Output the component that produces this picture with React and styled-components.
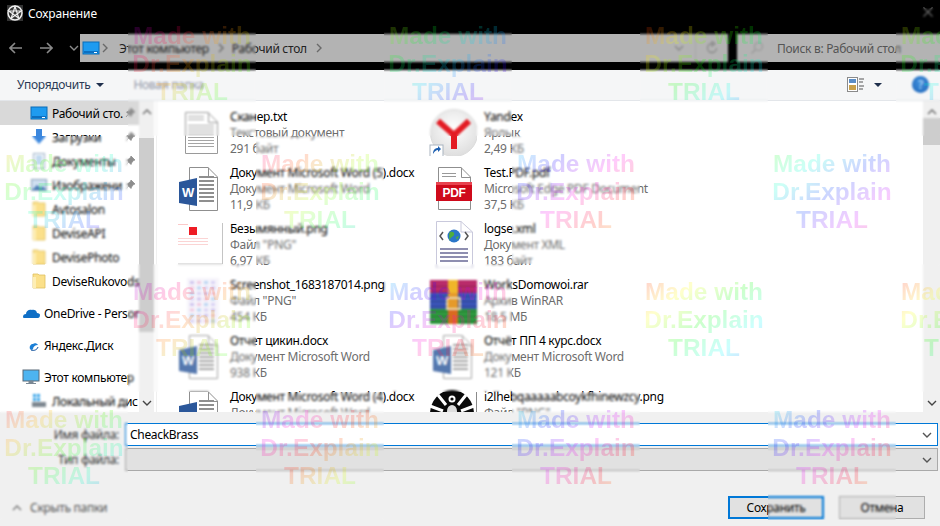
import React from 'react';
import styled, { createGlobalStyle } from 'styled-components';

const Global = createGlobalStyle`
  html, body { margin: 0; padding: 0; background: #000; }
  body { font-family: "Noto Sans", "Open Sans", sans-serif; }
`;

const Page = styled.div`
  position: relative;
  width: 940px;
  height: 526px;
  overflow: hidden;
  display: flex;
  flex-direction: column;
  font-size: 12px;
  letter-spacing: -0.3px;
  color: #000;
`;

const TitleBar = styled.div`
  height: 26px;
  background: #000;
  color: #fff;
  display: flex;
  align-items: center;
  padding-left: 7px;
  gap: 5px;
  flex: none;
  letter-spacing: -0.12px;
`;
const TitleText = styled.span`
  flex: 1;
`;
const CloseBtn = styled.svg`
  width: 12px;
  height: 12px;
  margin: 0 6px 2px 0;
`;

const NavBar = styled.div`
  height: 44px;
  background: #000;
  display: flex;
  align-items: flex-start;
  padding-top: 8px;
  box-sizing: border-box;
  flex: none;
`;
const ArrowGroup = styled.div`
  width: 80px;
  height: 28px;
  display: flex;
  align-items: center;
  padding-left: 9px;
  box-sizing: border-box;
  gap: 16px;
  flex: none;
`;
const Address = styled.div`
  width: 648px;
  height: 28px;
  background: #b3b3b3;
  display: flex;
  align-items: center;
  color: #222;
  padding-left: 2px;
  box-sizing: border-box;
  flex: none;
`;
const Crumb = styled.span`
  white-space: nowrap;
  margin: 0 7px 0 ${p => p.$ml || 6}px;
`;
const Spacer = styled.div`
  flex: 1;
`;
const AddrTool = styled.div`
  width: 33px;
  height: 28px;
  display: flex;
  align-items: center;
  justify-content: center;
  border-left: ${p => (p.$sep ? '1px solid #a8a8a8' : '0')};
  box-sizing: border-box;
`;
const Search = styled.div`
  margin-left: 9px;
  flex: 1;
  height: 28px;
  background: #b3b3b3;
  color: #555;
  display: flex;
  align-items: center;
  padding-left: 13px;
  gap: 13px;
`;

const Toolbar = styled.div`
  height: 31px;
  background: #f5f6f7;
  border-bottom: 1px solid #e3e6ea;
  box-sizing: border-box;
  display: flex;
  align-items: center;
  padding: 0 11px 1px 17px;
  flex: none;
`;
const ToolLabel = styled.span`
  color: ${p => (p.$off ? '#8f95a6' : '#2b3a55')};
  margin-left: ${p => p.$ml || 0}px;
`;
const Caret = styled.span`
  width: 0;
  height: 0;
  border-left: 4px solid transparent;
  border-right: 4px solid transparent;
  border-top: 4px solid #1f2f4c;
  margin-left: ${p => p.$ml || 0}px;
`;
const HelpBtn = styled.div`
  width: 17px;
  height: 17px;
  border-radius: 50%;
  background: radial-gradient(circle at 50% 40%, #3f8fdc, #1d64b8);
  color: #9cc4ee;
  font-weight: 700;
  font-size: 12px;
  display: flex;
  align-items: center;
  justify-content: center;
  margin-left: 30px;
`;

const Body = styled.div`
  flex: 1;
  display: flex;
  min-height: 0;
  background: #fff;
`;
const NavPane = styled.div`
  width: 139px;
  flex: none;
  overflow: hidden;
  display: flex;
  flex-direction: column;
`;
const NavRow = styled.div`
  height: 24px;
  flex: none;
  display: flex;
  align-items: center;
  white-space: nowrap;
  position: relative;
  padding-left: ${p => (p.$root ? 22 : 30)}px;
  margin-top: ${p => p.$gap || 0}px;
  background: ${p => (p.$active ? '#d9d9d9' : 'transparent')};
`;
const NavIcon = styled.svg`
  width: 18px;
  height: 18px;
  flex: none;
  margin-right: 4px;
`;
const Pin = styled.svg`
  position: absolute;
  left: 125px;
  top: 6px;
  width: 11px;
  height: 11px;
`;
const Scroll = styled.div`
  width: ${p => p.$w}px;
  flex: none;
  background: #f0f0f0;
  display: flex;
  flex-direction: column;
  align-items: stretch;
`;
const ScrollEnd = styled.div`
  height: ${p => p.$h}px;
  display: flex;
  align-items: ${p => p.$align || 'flex-start'};
  justify-content: center;
  flex: none;
  padding: 6px 0;
  box-sizing: border-box;
`;
const Thumb = styled.div`
  height: ${p => p.$h}px;
  background: #cdcdcd;
  flex: none;
`;
const Divider = styled.div`
  width: 3px;
  flex: none;
  border-right: 1px solid #f0f0f0;
  box-sizing: border-box;
`;
const Files = styled.div`
  flex: 1;
  overflow: hidden;
  display: grid;
  grid-template-columns: 254px 254px;
  grid-auto-rows: 56px;
  padding: 7px 0 0 18px;
`;
const FileItem = styled.div`
  display: flex;
  gap: 7px;
  white-space: nowrap;
`;
const FileIcon = styled.svg`
  width: 48px;
  height: 48px;
  flex: none;
  opacity: ${p => p.$fade || 1};
`;
const FileText = styled.div`
  padding-top: 1px;
  line-height: 16px;
`;
const Sub = styled.div`
  color: #6d6d6d;
`;

const Bottom = styled.div`
  height: 114px;
  flex: none;
  background: #f0f0f0;
  display: flex;
  flex-direction: column;
  padding: 11px 2px 0 0;
  box-sizing: border-box;
`;
const FieldRow = styled.div`
  display: flex;
  align-items: center;
  height: ${p => p.$h}px;
  margin-bottom: 2px;
`;
const FieldLabel = styled.label`
  width: 119px;
  text-align: right;
  color: #333;
  margin-right: 6px;
  flex: none;
`;
const Field = styled.div`
  flex: 1;
  height: 100%;
  box-sizing: border-box;
  border: 1px solid ${p => (p.$focus ? '#0078d7' : '#a9a9a9')};
  background: ${p => (p.$focus ? '#fff' : '#e1e1e1')};
  display: flex;
  align-items: center;
  padding: 0 5px 0 4px;
`;
const FieldText = styled.span`
  flex: 1;
`;
const Footer = styled.div`
  display: flex;
  align-items: center;
  margin-top: 23px;
  padding: 0 13px 0 12px;
`;
const Hide = styled.div`
  display: flex;
  align-items: center;
  gap: 8px;
  color: #555;
  flex: 1;
`;
const Btn = styled.div`
  width: ${p => p.$w}px;
  height: 23px;
  box-sizing: border-box;
  background: #e1e1e1;
  border: ${p => (p.$primary ? '2px solid #0078d7' : '1px solid #adadad')};
  display: flex;
  align-items: center;
  justify-content: center;
  margin-left: ${p => p.$ml || 0}px;
`;

const Mark = styled.div`
  position: absolute;
  width: 128px;
  height: 128px;
  box-sizing: border-box;
  padding-top: 14px;
  backdrop-filter: blur(1.25px);
  pointer-events: none;
  left: ${p => p.$x}px;
  top: ${p => p.$y}px;
`;
const MarkText = styled.div`
  font: bold 24.4px/28px "Liberation Sans", Arial, sans-serif;
  letter-spacing: 0;
  text-align: center;
  white-space: nowrap;
  color: transparent;
  -webkit-background-clip: text;
  background-clip: text;
  background-image: linear-gradient(
    142deg,
    ${p => [0, 60, 120, 180, 240].map(d => `hsla(${p.$hue + d}, 100%, 50%, 0.2)`).join(', ')}
  );
`;

const Chev = ({ dir = 'right', color = '#666', size = 10 }) => {
  const d = { right: 'M3 1l4 4-4 4', down: 'M1 3l4 4 4-4', up: 'M1 7l4-4 4 4' }[dir];
  return (
    <svg width={size} height={size} viewBox="0 0 10 10">
      <path d={d} fill="none" stroke={color} strokeWidth="1.4" />
    </svg>
  );
};
const ArrowIcon = ({ flip }) => (
  <svg width="14" height="12" viewBox="0 0 14 12" style={flip ? { transform: 'scaleX(-1)' } : undefined}>
    <path d="M6 1L1 6l5 5M1 6h12" fill="none" stroke="#8a8a8a" strokeWidth="1.6" />
  </svg>
);
const Monitor = () => (
  <>
    <rect x="1" y="3" width="16" height="12" fill="#1e9bf0" stroke="#0a6db8" />
    <rect x="2" y="12" width="14" height="2" fill="#0d6fc0" />
    <rect x="12" y="13" width="3" height="1" fill="#fff" />
  </>
);
const PinGlyph = () => (
  <Pin viewBox="0 0 11 11">
    <path d="M6 1l4 4-1.5.5L6.5 8 6 9.5 1.5 5 3 4.5 5.5 2.5z M3.5 7L1 10" fill="#8d8d8d" stroke="#8d8d8d" strokeWidth="0.8" />
  </Pin>
);
const Folder = () => (
  <NavIcon viewBox="0 0 18 18">
    <path d="M3 2h5l1 1h6v13H3z" fill="#fbe08a" stroke="#e0c060" strokeWidth="0.8" />
    <rect x="3" y="5" width="3" height="11" fill="#fdeeb5" />
  </NavIcon>
);

const Lines = ({ x, y, w, n, gap = 4, color = '#8e8e8e', h = 1 }) =>
  Array.from({ length: n }, (_, i) => <rect key={i} x={x} y={y + i * gap} width={w} height={h} fill={color} />);

const Page48 = ({ x0 = 10, y0 = 4, x1 = 42, y1 = 45, stroke = '#9a9a9a' }) => (
  <path
    d={`M${x0}.5 ${y0}.5H${x1 - 9}L${x1}.5 ${y0 + 10}V${y1}.5H${x0}.5zM${x1 - 9}.5 ${y0}.5V${y0 + 10}.5H${x1}`}
    fill="#fff"
    stroke={stroke}
  />
);

const TxtIcon = () => (
  <FileIcon viewBox="0 0 48 48">
    <Page48 />
    <Lines x={13} y={17} w={26} n={8} gap={3} color="#a5a5a5" />
    <Lines x={13} y={8} w={16} n={2} gap={3} color="#a5a5a5" />
  </FileIcon>
);
const WordIcon = ({ fade }) => (
  <FileIcon viewBox="0 0 48 48" $fade={fade}>
    <Page48 x0={14} y0={3} x1={42} y1={46} stroke="#8f8f8f" />
    <Lines x={24} y={12} w={15} n={7} gap={4} color="#8f8f8f" h={2} />
    <path d="M4 18L22 14V42L4 39z" fill="#2b579a" />
    <text x="13" y="33" fontFamily="Liberation Sans" fontSize="13" fontWeight="700" fill="#fff" textAnchor="middle">W</text>
  </FileIcon>
);
const PngRed = () => (
  <FileIcon viewBox="0 0 48 48">
    <rect x="14" y="7" width="8" height="8" fill="#ee1c25" />
    <Lines x={3} y={4} w={10} n={1} color="#fbc9c9" />
    <Lines x={3} y={18} w={30} n={3} gap={3} color="#fbd4d4" />
    <path d="M47.5 3V44H3" fill="none" stroke="#c4c4c4" />
  </FileIcon>
);
const Shot = () => (
  <FileIcon viewBox="0 0 48 48">
    <rect x="12" y="2" width="32" height="46" fill="#f6f4fb" />
    {[0, 1, 2, 3, 4, 5, 6, 7].flatMap(r =>
      [0, 1, 2, 3].map(c => (
        <rect key={`${r}${c}`} x={15 + c * 7} y={5 + r * 5.5} width="4" height="3" fill={['#cfc4ee', '#f0c9e0', '#bcd6f2', '#d9d2f4'][(r + c) % 4]} />
      ))
    )}
  </FileIcon>
);
const YandexIcon = () => (
  <FileIcon viewBox="0 0 48 48">
    <defs>
      <radialGradient id="yg" cx="50%" cy="40%" r="60%">
        <stop offset="0" stopColor="#ffffff" />
        <stop offset="1" stopColor="#dedede" />
      </radialGradient>
    </defs>
    <circle cx="25" cy="25" r="23.5" fill="url(#yg)" stroke="#dcdcdc" />
    <path d="M9 13l16 14v14M40 13L25 27" fill="none" stroke="#e31b23" strokeWidth="6" />
    <rect x="1" y="37" width="13" height="12" fill="#fff" stroke="#a9b4c0" />
    <path d="M4 46c0-4 2-6 5-6v-2l3 3-3 3v-2c-2 0-3 1-5 4z" fill="#1d5fb0" />
  </FileIcon>
);
const PdfIcon = () => (
  <FileIcon viewBox="0 0 48 48">
    <Page48 x0={9} y0={3} x1={41} y1={45} stroke="#8f8f8f" />
    <Lines x={13} y={9} w={14} n={2} gap={3} color="#999" />
    <rect x="7" y="18" width="36" height="19" fill="#cf0a1b" />
    <rect x="7" y="18" width="36" height="3" fill="#e8434f" />
    <text x="25" y="33" fontFamily="Liberation Sans" fontSize="12" fontWeight="700" fill="#fff" textAnchor="middle">PDF</text>
  </FileIcon>
);
const XmlIcon = () => (
  <FileIcon viewBox="0 0 48 48">
    <path d="M7.5 1.5H32L43.5 12V48H7.5z" fill="#fff" stroke="#c9c9dc" />
    <path d="M32 1.5V12H43.5" fill="none" stroke="#c9c9dc" />
    <circle cx="25" cy="16" r="6.5" fill="#2a76c8" />
    <path d="M21 12c3-1 5 1 4 3s-4 2-4 5-2-6 0-8zM27 17l3-1-2 4z" fill="#4fae3c" />
    <path d="M14 12l-3 4 3 4M36 12l3 4-3 4" fill="none" stroke="#555" strokeWidth="1.5" />
    <Lines x={11} y={28} w={28} n={4} gap={4} color="#8e8eb0" h={2} />
  </FileIcon>
);
const RarIcon = () => (
  <FileIcon viewBox="0 0 48 48">
    <rect x="1" y="4" width="47" height="45" rx="3" fill="#7d2a8c" />
    <rect x="1" y="4" width="47" height="13" fill="#b92b6a" />
    <rect x="1" y="17" width="47" height="16" fill="#3a55b8" />
    <rect x="1" y="33" width="47" height="16" fill="#2f9a3f" />
    <rect x="19" y="4" width="10" height="13" fill="#f0b62a" />
    <rect x="19" y="17" width="10" height="16" fill="#e59a2a" />
    <rect x="19" y="33" width="10" height="16" fill="#d96a20" />
    <rect x="18" y="22" width="13" height="11" fill="none" stroke="#e8d8b0" strokeWidth="2" />
    <Lines x={1} y={10} w={18} n={8} gap={5} color="rgba(0,0,0,.22)" />
    <Lines x={29} y={10} w={19} n={8} gap={5} color="rgba(0,0,0,.22)" />
  </FileIcon>
);
const LogoIcon = () => (
  <FileIcon viewBox="0 0 48 48">
    <ellipse cx="23" cy="26" rx="22" ry="24" fill="#0a0a0a" />
    <path d="M9 7L17 17M37 7L29 17M1 18L14 23M45 18L32 23M2 30L13 28M44 30L33 28" stroke="#fff" strokeWidth="3" />
    <path d="M47.5 4V24" stroke="#8a8a8a" />
    <circle cx="23" cy="11" r="3.5" fill="#fff" />
    <circle cx="23" cy="11" r="1.6" fill="#0a0a0a" />
    <ellipse cx="23" cy="23" rx="5" ry="6" fill="#ddd" />
  </FileIcon>
);

const files = [
  [<TxtIcon />, 'Сканер.txt', 'Текстовый документ', '291 байт'],
  [<YandexIcon />, 'Yandex', 'Ярлык', '2,49 КБ'],
  [<WordIcon />, 'Документ Microsoft Word (5).docx', 'Документ Microsoft Word', '11,9 КБ'],
  [<PdfIcon />, 'Test.PDF.pdf', 'Microsoft Edge PDF Document', '37,5 КБ'],
  [<PngRed />, 'Безымянный.png', 'Файл "PNG"', '6,97 КБ'],
  [<XmlIcon />, 'logse.xml', 'Документ XML', '183 байт'],
  [<Shot />, 'Screenshot_1683187014.png', 'Файл "PNG"', '454 КБ'],
  [<RarIcon />, 'WorksDomowoi.rar', 'Архив WinRAR', '18,5 МБ'],
  [<WordIcon fade={0.8} />, 'Отчет цикин.docx', 'Документ Microsoft Word', '938 КБ'],
  [<WordIcon fade={0.8} />, 'Отчёт ПП 4 курс.docx', 'Документ Microsoft Word', '121 КБ'],
  [<WordIcon />, 'Документ Microsoft Word (4).docx', 'Документ Microsoft Word', '12 КБ'],
  [<LogoIcon />, 'i2lhebqaaaaabcoykfhinewzcy.png', 'Файл "PNG"', '20 КБ'],
];

const marks = [
  [128, 8, 280], [384, 8, 70], [640, 8, 0], [896, 8, 55],
  [0, 136, 45], [256, 136, 320], [512, 136, 185], [768, 136, 110],
  [128, 264, 270], [384, 264, 190], [640, 264, 0], [896, 264, 0],
  [0, 392, 345], [256, 392, 250], [512, 392, 175], [768, 392, 175],
];

export default function App() {
  return (
    <Page>
      <Global />
      <TitleBar>
        <svg width="16" height="16" viewBox="0 0 16 16">
          <rect width="16" height="16" fill="#333" />
          <circle cx="8" cy="8" r="7" fill="none" stroke="#eee" strokeWidth="1.5" />
          <path d="M8 1.5L11.8 13.2 1.8 6h12.4L4.2 13.2z" fill="none" stroke="#eee" strokeWidth="1.2" />
        </svg>
        <TitleText>Сохранение</TitleText>
        <CloseBtn viewBox="0 0 12 12">
          <path d="M1.5 1.5l9 9M10.5 1.5l-9 9" stroke="#6a6a6a" strokeWidth="1.2" />
        </CloseBtn>
      </TitleBar>
      <NavBar>
        <ArrowGroup>
          <ArrowIcon />
          <ArrowIcon flip />
          <Chev dir="down" color="#8a8a8a" size={10} />
        </ArrowGroup>
        <Address>
          <svg width="18" height="18" viewBox="0 0 18 18"><Monitor /></svg>
          <Chev color="#6a6a6a" />
          <Crumb $ml={9}>Этот компьютер</Crumb>
          <Chev color="#6a6a6a" />
          <Crumb>Рабочий стол</Crumb>
          <Chev color="#6a6a6a" />
          <Spacer />
          <AddrTool><Chev dir="down" color="#888" /></AddrTool>
          <AddrTool $sep>
            <svg width="14" height="14" viewBox="0 0 14 14">
              <path d="M11.5 7A4.5 4.5 0 1 1 7 2.5M7 .5V5l3-2.2z" fill="none" stroke="#8a8a8a" strokeWidth="1.3" />
            </svg>
          </AddrTool>
        </Address>
        <Search>
          <svg width="14" height="14" viewBox="0 0 14 14">
            <circle cx="8.5" cy="5.5" r="4" fill="none" stroke="#999" strokeWidth="1.2" />
            <path d="M5.5 8.5L1.5 12.5" stroke="#999" strokeWidth="1.5" />
          </svg>
          Поиск в: Рабочий стол
        </Search>
      </NavBar>
      <Toolbar>
        <ToolLabel>Упорядочить</ToolLabel>
        <Caret $ml={6} />
        <ToolLabel $off $ml={29}>Новая папка</ToolLabel>
        <Spacer />
        <svg width="18" height="18" viewBox="0 0 18 18">
          <rect x="0.5" y="1.5" width="10" height="14" fill="#fff" stroke="#8a8a8a" />
          <rect x="2" y="3" width="7" height="4" fill="#5b8dc6" />
          <rect x="2" y="9" width="7" height="5" fill="#c9a04a" />
          <path d="M12 3h5M12 6h4M12 10h5M12 13h4" stroke="#555" />
        </svg>
        <Caret $ml={9} />
        <HelpBtn>?</HelpBtn>
      </Toolbar>
      <Body>
        <NavPane>
          <NavRow $active>
            <NavIcon viewBox="0 0 18 18"><Monitor /></NavIcon>
            Рабочий сто.
            <PinGlyph />
          </NavRow>
          <NavRow>
            <NavIcon viewBox="0 0 18 18">
              <path d="M6 1h6v7h4l-7 8-7-8h4z" fill="#3b87de" />
            </NavIcon>
            Загрузки
            <PinGlyph />
          </NavRow>
          <NavRow>
            <NavIcon viewBox="0 0 18 18">
              <rect x="3.5" y="1.5" width="11" height="15" fill="#f4f8fc" stroke="#9fb3c8" />
              <path d="M6 5h6M6 8h6M6 11h6" stroke="#5b9bd5" />
            </NavIcon>
            Документы
            <PinGlyph />
          </NavRow>
          <NavRow>
            <NavIcon viewBox="0 0 18 18">
              <rect x="1.5" y="3.5" width="15" height="11" fill="#cfdff0" stroke="#8ba2bb" />
              <path d="M2 14l5-5 4 3 2-2 3 4z" fill="#4d7fb8" />
            </NavIcon>
            Изображени
            <PinGlyph />
          </NavRow>
          <NavRow><Folder />Avtosalon</NavRow>
          <NavRow><Folder />DeviseAPI</NavRow>
          <NavRow><Folder />DevisePhoto</NavRow>
          <NavRow><Folder />DeviseRukovods</NavRow>
          <NavRow $root $gap={8}>
            <NavIcon viewBox="0 0 18 18">
              <path d="M1 13c0-2 1-3 3-3 0-3 3-5 6-4 1-1 5 0 5 3 2 0 3 1 3 2 0 2-1 3-2 3H3c-1 0-2 0-2-1z" fill="#0f6fc6" />
            </NavIcon>
            OneDrive - Person
          </NavRow>
          <NavRow $root $gap={8}>
            <NavIcon viewBox="0 0 18 18">
              <path d="M8 13c-1-3 1-5 3-5 1-1 4-1 5 1-3 0-5 2-5 4 0 1-3 1-3 0z" fill="#1b7fd6" />
              <path d="M9 14c3 1 6 0 7-3" fill="none" stroke="#0d4f9c" />
            </NavIcon>
            Яндекс.Диск
          </NavRow>
          <NavRow $root $gap={8}>
            <NavIcon viewBox="0 0 18 18">
              <rect x="1" y="2" width="16" height="11" fill="#4db4f0" stroke="#5a6a78" />
              <path d="M7 13h4v2H7zM4 15.5h10" stroke="#7a8894" fill="#7a8894" />
            </NavIcon>
            Этот компьютер
          </NavRow>
          <NavRow>
            <NavIcon viewBox="0 0 18 18">
              <rect x="2" y="10" width="14" height="5" fill="#7d8790" />
              <rect x="3" y="2" width="3" height="3" fill="#36a3e8" />
              <rect x="7" y="2" width="3" height="3" fill="#36a3e8" />
              <rect x="3" y="6" width="3" height="3" fill="#36a3e8" />
              <rect x="7" y="6" width="3" height="3" fill="#36a3e8" />
            </NavIcon>
            Локальный дис
          </NavRow>
        </NavPane>
        <Scroll $w={15}>
          <ScrollEnd $h={37}><Chev dir="up" color="#666" /></ScrollEnd>
          <Thumb $h={194} />
          <Spacer />
          <ScrollEnd $h={18} $align="center"><Chev dir="down" color="#444" /></ScrollEnd>
        </Scroll>
        <Divider />
        <Files>
          {files.map(([icon, name, type, size]) => (
            <FileItem key={name}>
              {icon}
              <FileText>
                <div>{name}</div>
                <Sub>{type}</Sub>
                <Sub>{size}</Sub>
              </FileText>
            </FileItem>
          ))}
        </Files>
        <Scroll $w={17}>
          <ScrollEnd $h={17}><Chev dir="up" color="#666" /></ScrollEnd>
          <Thumb $h={27} />
          <Spacer />
          <ScrollEnd $h={18} $align="center"><Chev dir="down" color="#444" /></ScrollEnd>
        </Scroll>
      </Body>
      <Bottom>
        <FieldRow $h={23}>
          <FieldLabel>Имя файла:</FieldLabel>
          <Field $focus>
            <FieldText>CheackBrass</FieldText>
            <Chev dir="down" color="#555" />
          </Field>
        </FieldRow>
        <FieldRow $h={23}>
          <FieldLabel>Тип файла:</FieldLabel>
          <Field>
            <FieldText />
            <Chev dir="down" color="#555" />
          </Field>
        </FieldRow>
        <Footer>
          <Hide>
            <Chev dir="up" color="#777" />
            Скрыть папки
          </Hide>
          <Btn $w={96} $primary>Сохранить</Btn>
          <Btn $w={86} $ml={15}>Отмена</Btn>
        </Footer>
      </Bottom>
      {marks.map(([x, y, h]) => (
        <Mark key={`${x}-${y}`} $x={x} $y={y}>
          <MarkText $hue={h}>
            Made with<br />Dr.Explain<br />TRIAL
          </MarkText>
        </Mark>
      ))}
    </Page>
  );
}
